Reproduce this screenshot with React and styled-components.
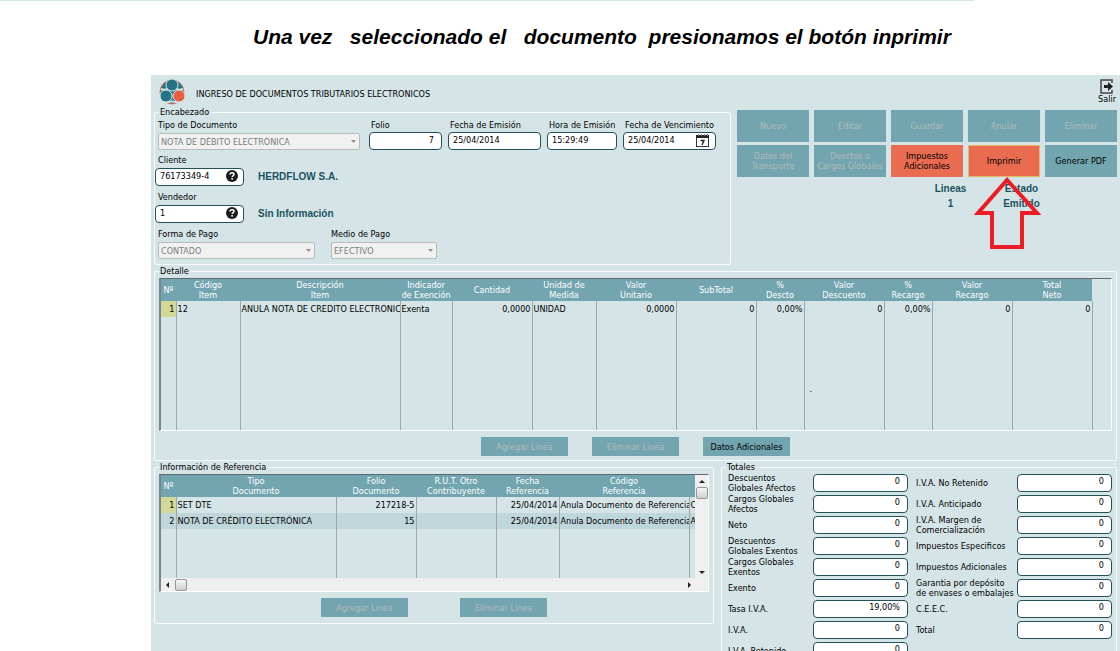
import styled, { createGlobalStyle } from "styled-components";

const BUTTONS = [
  { text: "Nuevo", disabled: true },
  { text: "Editar", disabled: true },
  { text: "Guardar", disabled: true },
  { text: "Anular", disabled: true },
  { text: "Eliminar", disabled: true },
  { text: "Datos del\nTransporte", disabled: true },
  { text: "Desctos o\nCargos Globales", disabled: true },
  { text: "Impuestos\nAdicionales", hot: true },
  { text: "Imprimir", hot: true, focused: true },
  { text: "Generar PDF" },
];

const DETAIL_COLUMNS = [
  { title: "Nº", width: 15, right: true },
  { title: "Código\nItem", width: 64 },
  { title: "Descripción\nItem", width: 160 },
  { title: "Indicador\nde Exención", width: 52 },
  { title: "Cantidad", width: 80, right: true },
  { title: "Unidad de\nMedida", width: 64 },
  { title: "Valor\nUnitario", width: 80, right: true },
  { title: "SubTotal", width: 80, right: true },
  { title: "%\nDescto", width: 48, right: true },
  { title: "Valor\nDescuento", width: 80, right: true },
  { title: "%\nRecargo", width: 48, right: true },
  { title: "Valor\nRecargo", width: 80, right: true },
  { title: "Total\nNeto", width: 80, right: true },
];

const DETAIL_ROWS = [
  [
    "1",
    "12",
    "ANULA NOTA DE CREDITO ELECTRONICA",
    "Exenta",
    "0,0000",
    "UNIDAD",
    "0,0000",
    "0",
    "0,00%",
    "0",
    "0,00%",
    "0",
    "0",
  ],
];

const REF_COLUMNS = [
  { title: "Nº", width: 15, right: true },
  { title: "Tipo\nDocumento", width: 160 },
  { title: "Folio\nDocumento", width: 80, right: true },
  { title: "R.U.T. Otro\nContribuyente", width: 80 },
  { title: "Fecha\nReferencia", width: 63, right: true },
  { title: "Código\nReferencia", width: 130 },
  { title: "", width: 0, open: true },
];

const REF_ROWS = [
  ["1", "SET DTE", "217218-5", "", "25/04/2014", "Anula Documento de Referencia", "C"],
  ["2", "NOTA DE CRÉDITO ELECTRÓNICA", "15", "", "25/04/2014", "Anula Documento de Referencia", "A"],
];

const TOTALS_LEFT = [
  ["Descuentos\nGlobales Afectos", "0"],
  ["Cargos Globales\nAfectos", "0"],
  ["Neto", "0"],
  ["Descuentos\nGlobales Exentos", "0"],
  ["Cargos Globales\nExentos", "0"],
  ["Exento", "0"],
  ["Tasa I.V.A.", "19,00%"],
  ["I.V.A.", "0"],
  ["I.V.A. Retenido", "0"],
];

const TOTALS_RIGHT = [
  ["I.V.A. No Retenido", "0"],
  ["I.V.A. Anticipado", "0"],
  ["I.V.A. Margen de\nComercialización", "0"],
  ["Impuestos Especificos", "0"],
  ["Impuestos Adicionales", "0"],
  ["Garantia por depósito\nde envases o embalajes", "0"],
  ["C.E.E.C.", "0"],
  ["Total", "0"],
];

const Logo = () => (
  <svg width="28" height="28" viewBox="0 0 28 28" aria-hidden="true">
    <circle cx="14" cy="14" r="12" fill="#237484" stroke="#e0714f" strokeWidth="1" />
    <path
      d="M3 11Q8 13 10 10M25 11Q20 13 18 10M8 25Q14 22 20 25"
      fill="none"
      stroke="#d5e5e7"
      strokeWidth="2"
    />
    <circle cx="14" cy="7" r="6" fill="#237484" stroke="#d5e5e7" />
    <circle cx="8" cy="18" r="6" fill="#237484" stroke="#d5e5e7" />
    <circle cx="21" cy="18" r="6" fill="#ea5f3e" stroke="#d5e5e7" />
  </svg>
);

const ExitIcon = () => (
  <svg width="14" height="15" viewBox="0 0 14 15" aria-hidden="true">
    <path d="M12 4V1H1V14H12V11" fill="none" stroke="#444" strokeWidth="1.5" />
    <path d="M4 6H8V3L13 7.5L8 12V9H4Z" fill="#222" />
  </svg>
);

const HelpIcon = () => (
  <svg width="12" height="12" viewBox="0 0 12 12" aria-hidden="true">
    <circle cx="6" cy="6" r="6" fill="#1c1c1c" />
    <path
      d="M4 4.6Q4 2.7 6 2.7Q8 2.7 8 4.3Q8 5.3 6.9 5.8Q6.2 6.2 6.2 7"
      fill="none"
      stroke="#fff"
      strokeWidth="1.5"
    />
    <rect x="5.3" y="8" width="1.6" height="1.6" fill="#fff" />
  </svg>
);

const CalendarIcon = () => (
  <svg width="14" height="14" viewBox="0 0 14 14" aria-hidden="true">
    <rect x="0.5" y="2.5" width="12" height="10" fill="#fff" stroke="#333" />
    <path d="M0 1H13V4H0Z" fill="#222" />
    <path d="M2.5 0V2M5.5 0V2M8.5 0V2M11.5 0V2" stroke="#888" />
    <path d="M4.5 6.5H8L6 11" fill="none" stroke="#222" strokeWidth="1.4" />
  </svg>
);

const Select = ({ id, label, value, width }) => (
  <Field $width={width} $gap={3}>
    <label htmlFor={id}>{label}</label>
    <SelectBox>
      <select id={id} disabled defaultValue={value}>
        <option>{value}</option>
      </select>
      <svg width="5" height="3" viewBox="0 0 5 3" aria-hidden="true">
        <path d="M0 0H5L2.5 3Z" fill="#8f8f8f" />
      </svg>
    </SelectBox>
  </Field>
);

const TextField = ({ id, label, value, width, right, icon, indent = 2, gap = 2 }) => (
  <Field $width={width} $gap={gap} $indent={indent}>
    <label htmlFor={id}>{label}</label>
    <InputBox>
      <Input id={id} defaultValue={value} $right={right} />
      {icon && <IconButton aria-label={`Buscar ${label}`}>{icon}</IconButton>}
    </InputBox>
  </Field>
);

const Grid = ({ columns, rows, mark }) => (
  <Table>
    <colgroup>
      {columns.map((c, i) => (
        <col key={i} style={c.width ? { width: c.width } : undefined} />
      ))}
      {!columns[columns.length - 1].open && <col />}
    </colgroup>
    <thead>
      <tr>
        {columns.map((c, i) => (
          <Th key={i}>{c.title}</Th>
        ))}
      </tr>
    </thead>
    <tbody>
      {rows.map((row, r) => (
        <Row key={r} $alt={r % 2 === 1}>
          {row.map((cell, i) => (
            <Td
              key={i}
              $right={columns[i].right}
              $current={r === 0 && i === 0}
              $open={columns[i].open}
            >
              {cell}
            </Td>
          ))}
        </Row>
      ))}
      <FillRow>
        {columns.map((c, i) => (
          <Td key={i} $open={c.open}>
            {i === mark ? "." : ""}
          </Td>
        ))}
      </FillRow>
    </tbody>
  </Table>
);

const TotalsList = ({ rows, prefix, labelWidth }) => (
  <Totals>
    {rows.map(([label, value], i) => (
      <TotalRow key={label} $labelWidth={labelWidth}>
        <label htmlFor={`${prefix}${i}`}>{label}</label>
        <Input id={`${prefix}${i}`} defaultValue={value} $right />
      </TotalRow>
    ))}
  </Totals>
);

const App = () => (
  <Page>
    <GlobalStyle />
    <TopRule />
    <Heading>Una vez   seleccionado el   documento  presionamos el botón inprimir</Heading>
    <Window>
      <TitleBar>
        <Logo />
        <h2>INGRESO DE DOCUMENTOS TRIBUTARIOS ELECTRONICOS</h2>
        <ExitButton>
          <ExitIcon />
          Salir
        </ExitButton>
      </TitleBar>

      <Upper>
        <Group $height={153}>
          <legend>Encabezado</legend>
          <HeaderForm>
            <FormRow>
              <Select id="tipo" label="Tipo de Documento" value="NOTA DE DÉBITO ELECTRÓNICA" width={202} />
              <DateFields>
                <TextField id="folio" label="Folio" value="7" width={73} right />
                <TextField id="emision" label="Fecha de Emisión" value="25/04/2014" width={93} />
                <TextField id="hora" label="Hora de Emisión" value="15:29:49" width={70} />
                <TextField
                  id="vencimiento"
                  label="Fecha de Vencimiento"
                  value="25/04/2014"
                  width={93}
                  icon={<CalendarIcon />}
                />
              </DateFields>
            </FormRow>
            <PartyRow>
              <TextField
                id="cliente"
                label="Cliente"
                value="76173349-4"
                width={89}
                icon={<HelpIcon />}
                indent={3}
                gap={3}
              />
              <Strong>HERDFLOW S.A.</Strong>
            </PartyRow>
            <PartyRow>
              <TextField
                id="vendedor"
                label="Vendedor"
                value="1"
                width={89}
                icon={<HelpIcon />}
                indent={3}
                gap={3}
              />
              <Strong>Sin Información</Strong>
            </PartyRow>
            <PayRow>
              <Select id="forma" label="Forma de Pago" value="CONTADO" width={157} />
              <Select id="medio" label="Medio de Pago" value="EFECTIVO" width={106} />
            </PayRow>
          </HeaderForm>
        </Group>

        <Actions>
          <ButtonGrid>
            {BUTTONS.map((b) => (
              <ActionButton key={b.text} disabled={b.disabled} $hot={b.hot} $focused={b.focused}>
                {b.text}
              </ActionButton>
            ))}
          </ButtonGrid>
          <Status>
            <div>
              <dt>Lineas</dt>
              <dd>1</dd>
            </div>
            <div>
              <dt>Estado</dt>
              <dd>Emitido</dd>
            </div>
          </Status>
          <Arrow width="68" height="76" viewBox="0 0 68 76" aria-hidden="true">
            <path
              d="M34 5L64 38H49V72H19V38H5Z"
              fill="none"
              stroke="#ed1c24"
              strokeWidth="4"
            />
          </Arrow>
        </Actions>
      </Upper>

      <Group $height={190}>
        <legend>Detalle</legend>
        <Sheet $height={153}>
          <Grid columns={DETAIL_COLUMNS} rows={DETAIL_ROWS} mark={9} />
        </Sheet>
        <ButtonRow $gap={24}>
          <SmallButton disabled>Agregar Linea</SmallButton>
          <SmallButton disabled>Eliminar Linea</SmallButton>
          <SmallButton>Datos Adicionales</SmallButton>
        </ButtonRow>
      </Group>

      <Lower>
        <Group $height={157}>
          <legend>Información de Referencia</legend>
          <Sheet $height={118}>
            <ScrollArea>
              <Grid columns={REF_COLUMNS} rows={REF_ROWS} />
              <VerticalBar>
                <svg width="13" height="12" aria-hidden="true">
                  <path d="M4 8H10L7 5Z" fill="#222" />
                </svg>
                <Thumb />
                <Spacer />
                <svg width="13" height="12" aria-hidden="true">
                  <path d="M4 5H10L7 8Z" fill="#222" />
                </svg>
              </VerticalBar>
            </ScrollArea>
            <HorizontalBar>
              <svg width="14" height="12" aria-hidden="true">
                <path d="M8 3V9L5 6Z" fill="#222" />
              </svg>
              <Thumb />
              <Spacer />
              <svg width="14" height="12" aria-hidden="true">
                <path d="M7 3V9L10 6Z" fill="#222" />
              </svg>
            </HorizontalBar>
          </Sheet>
          <ButtonRow $gap={52}>
            <SmallButton disabled>Agregar Linea</SmallButton>
            <SmallButton disabled>Eliminar Linea</SmallButton>
          </ButtonRow>
        </Group>

        <Group $height={200}>
          <legend>Totales</legend>
          <TotalsColumns>
            <TotalsList rows={TOTALS_LEFT} prefix="left" labelWidth={85} />
            <TotalsList rows={TOTALS_RIGHT} prefix="right" labelWidth={101} />
          </TotalsColumns>
        </Group>
      </Lower>
    </Window>
  </Page>
);

const GlobalStyle = createGlobalStyle`
  * {
    box-sizing: border-box;
  }

  body {
    margin: 0;
    background: #fff;
  }

  body, button, input, select {
    font-family: "DejaVu Sans Condensed", "DejaVu Sans", sans-serif;
    font-size: 9px;
    line-height: 10px;
    color: #000;
  }
`;

const Page = styled.main`
  height: 100vh;
  overflow: hidden;
`;

const TopRule = styled.div`
  width: 87%;
  height: 1px;
  background: #d5e5e7;
`;

const Heading = styled.h1`
  margin: 0;
  padding: 24px 0 26px 253px;
  font: italic bold 21px/24px "Liberation Sans", Arial, sans-serif;
  white-space: pre;
`;

const Window = styled.section`
  margin-left: 151px;
  padding: 3px 3px 0;
  background: #d5e5e7;
`;

const TitleBar = styled.header`
  display: flex;
  align-items: flex-start;
  height: 29px;
  padding-left: 4px;

  h2 {
    flex: 1;
    margin: 11px 0 0 10px;
    font-size: 9px;
    font-weight: normal;
  }
`;

const ExitButton = styled.button`
  display: flex;
  flex-direction: column;
  align-items: center;
  padding: 1px 1px;
  border: 0;
  background: none;
`;

const Upper = styled.div`
  display: grid;
  grid-template-columns: 577px 1fr;
  gap: 6px;
  margin-bottom: 1px;
`;

const Lower = styled.div`
  display: grid;
  grid-template-columns: 560px 1fr;
  align-items: start;
  gap: 7px;
  margin-top: 1px;
`;

const Group = styled.fieldset`
  min-width: 0;
  min-height: ${({ $height }) => $height + 5}px;
  margin: 0;
  padding: 0 4px;
  border: 1px solid #f7fbfb;
  border-radius: 2px;

  legend {
    height: 10px;
    margin-left: 0;
    padding: 0 2px 0 1px;
  }
`;

const HeaderForm = styled.div`
  display: flex;
  flex-direction: column;
`;

const FormRow = styled.div`
  display: flex;
  gap: 9px;
  margin: 3px 9px 5px -1px;
`;

const DateFields = styled.div`
  display: flex;
  flex: 1;
  gap: 6px;
`;

const PartyRow = styled.div`
  display: flex;
  align-items: flex-end;
  gap: 14px;
  margin: 0 0 6px -4px;
`;

const PayRow = styled.div`
  display: flex;
  gap: 16px;
  margin-left: -1px;
`;

const Field = styled.div`
  display: flex;
  flex-direction: column;
  gap: ${({ $gap }) => $gap}px;
  width: ${({ $width }) => $width}px;

  label {
    padding-left: ${({ $indent }) => $indent || 0}px;
    white-space: nowrap;
  }
`;

const SelectBox = styled.div`
  position: relative;

  select {
    display: block;
    width: 100%;
    height: 17px;
    padding: 0 2px;
    border: 1px solid #b4bcbc;
    border-radius: 2px;
    background: #f1f1f1;
    color: #7c7c7c;
    opacity: 1;
    appearance: none;
  }

  svg {
    position: absolute;
    top: 7px;
    right: 4px;
  }
`;

const InputBox = styled.div`
  position: relative;
`;

const Input = styled.input`
  display: block;
  width: 100%;
  height: 18px;
  padding: 0 7px 3px 4px;
  border: 1px solid #24505a;
  border-radius: 4px;
  background: #fff;
  text-align: ${({ $right }) => ($right ? "right" : "left")};
`;

const IconButton = styled.button`
  position: absolute;
  top: 2px;
  right: 6px;
  display: flex;
  padding: 0;
  border: 0;
  background: none;
`;

const Strong = styled.strong`
  height: 15px;
  font: bold 10px/12px "Liberation Sans", Arial, sans-serif;
  color: #1b5261;
`;

const Actions = styled.div`
  position: relative;
  padding-top: 3px;
`;

const ButtonGrid = styled.div`
  display: grid;
  grid-template-columns: repeat(5, 1fr);
  gap: 3px 5px;
`;

const ActionButton = styled.button`
  height: 32px;
  padding: 0;
  border: 1px solid ${({ $focused, $hot }) => ($focused ? "#e8b765" : $hot ? "#e96c50" : "#72a5af")};
  background: ${({ $hot }) => ($hot ? "#e96c50" : "#72a5af")};
  white-space: pre;

  &:disabled {
    color: #b3babb;
  }
`;

const Status = styled.dl`
  display: flex;
  justify-content: flex-end;
  gap: 6px;
  margin: 4px 63px 0 0;
  font: bold 10px/15px "Liberation Sans", Arial, sans-serif;
  color: #1b5261;
  text-align: center;

  div {
    width: 65px;
  }

  dd {
    margin: 0;
  }
`;

const Arrow = styled.svg`
  position: absolute;
  top: 68px;
  right: 76px;
`;

const Sheet = styled.div`
  display: flex;
  flex-direction: column;
  height: ${({ $height }) => $height}px;
  margin-top: 2px;
  border: 1px solid #fff;
  border-top-color: #60696c;
  border-left: 2px solid #7c8587;
`;

const Table = styled.table`
  flex: 1;
  width: 100%;
  height: 100%;
  table-layout: fixed;
  border-collapse: collapse;
`;

const Th = styled.th`
  height: 22px;
  padding: 0;
  background: #72a5af;
  color: #fff;
  font-weight: normal;
  white-space: pre;
`;

const Row = styled.tr`
  height: 16px;
  background: ${({ $alt }) => ($alt ? "#bfd6da" : "none")};
`;

const FillRow = styled.tr`
  td {
    padding: 0 0 36px 5px;
    vertical-align: bottom;
  }
`;

const Td = styled.td`
  overflow: hidden;
  padding: 0 ${({ $right }) => ($right ? 1 : 0)}px 0 1px;
  border-right: ${({ $open }) => ($open ? 0 : "1px solid #9fa6a8")};
  background: ${({ $current }) => ($current ? "#d3d899" : "none")};
  text-align: ${({ $right }) => ($right ? "right" : "left")};
  white-space: nowrap;
`;

const ButtonRow = styled.div`
  display: flex;
  justify-content: center;
  gap: ${({ $gap }) => $gap}px;
  margin-top: 6px;
`;

const SmallButton = styled.button`
  width: 87px;
  height: 19px;
  padding: 0;
  border: 0;
  background: #72a5af;

  &:disabled {
    color: #b3babb;
  }
`;

const ScrollArea = styled.div`
  display: flex;
  flex: 1;
  min-height: 0;
`;

const VerticalBar = styled.div`
  display: flex;
  flex-direction: column;
  align-items: center;
  width: 13px;
  background: #efefef;
`;

const HorizontalBar = styled.div`
  display: flex;
  align-items: center;
  height: 13px;
  padding-right: 13px;
  background: #efefef;
`;

const Thumb = styled.div`
  width: 12px;
  height: 12px;
  border: 1px solid #979797;
  border-radius: 2px;
  background: linear-gradient(#f6f6f6, #cfcfcf);
`;

const Spacer = styled.div`
  flex: 1;
`;

const TotalsColumns = styled.div`
  display: flex;
  justify-content: space-between;
  gap: 8px;
  padding-left: 2px;
`;

const Totals = styled.div`
  display: flex;
  flex-direction: column;
`;

const TotalRow = styled.div`
  display: grid;
  grid-template-columns: ${({ $labelWidth }) => $labelWidth}px 95px;
  align-items: center;
  height: 21px;

  label {
    white-space: pre;
  }
`;

export default App;
